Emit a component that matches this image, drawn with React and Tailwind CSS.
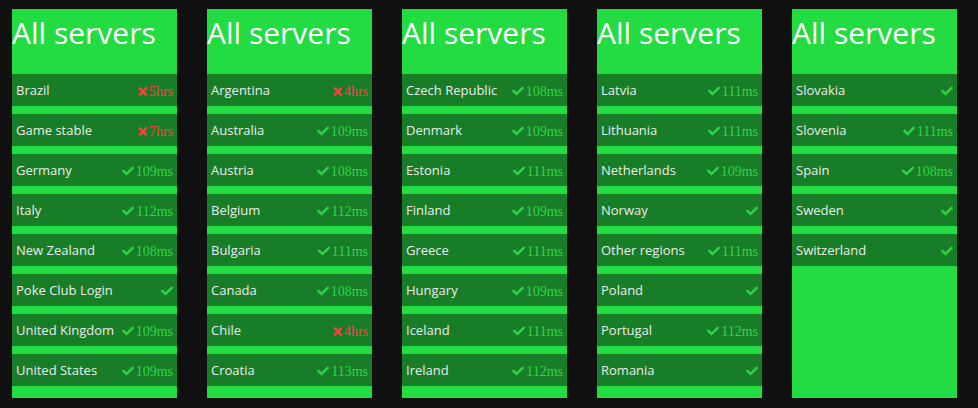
import React from "react";
import { FaCheck, FaTimes } from "react-icons/fa";

const columns = [
  [
    ["Brazil", "bad", "5hrs"],
    ["Game stable", "bad", "7hrs"],
    ["Germany", "ok", "109ms"],
    ["Italy", "ok", "112ms"],
    ["New Zealand", "ok", "108ms"],
    ["Poke Club Login", "ok", ""],
    ["United Kingdom", "ok", "109ms"],
    ["United States", "ok", "109ms"],
  ],
  [
    ["Argentina", "bad", "4hrs"],
    ["Australia", "ok", "109ms"],
    ["Austria", "ok", "108ms"],
    ["Belgium", "ok", "112ms"],
    ["Bulgaria", "ok", "111ms"],
    ["Canada", "ok", "108ms"],
    ["Chile", "bad", "4hrs"],
    ["Croatia", "ok", "113ms"],
  ],
  [
    ["Czech Republic", "ok", "108ms"],
    ["Denmark", "ok", "109ms"],
    ["Estonia", "ok", "111ms"],
    ["Finland", "ok", "109ms"],
    ["Greece", "ok", "111ms"],
    ["Hungary", "ok", "109ms"],
    ["Iceland", "ok", "111ms"],
    ["Ireland", "ok", "112ms"],
  ],
  [
    ["Latvia", "ok", "111ms"],
    ["Lithuania", "ok", "111ms"],
    ["Netherlands", "ok", "109ms"],
    ["Norway", "ok", ""],
    ["Other regions", "ok", "111ms"],
    ["Poland", "ok", ""],
    ["Portugal", "ok", "112ms"],
    ["Romania", "ok", ""],
  ],
  [
    ["Slovakia", "ok", ""],
    ["Slovenia", "ok", "111ms"],
    ["Spain", "ok", "108ms"],
    ["Sweden", "ok", ""],
    ["Switzerland", "ok", ""],
  ],
];

const ServerRow = ({ name, state, value }) => {
  const bad = state === "bad";
  return (
    <div className="flex items-center justify-between h-8 mb-2 bg-[#177d26] pl-1 pr-1 pt-[2px]">
      <span className="text-[13px] text-[#ececec] font-['Open_Sans',sans-serif]">{name}</span>
      <span
        className={
          bad
            ? "flex items-center gap-[1px] text-[#ff4040] text-[14px] font-['Liberation_Serif',serif]"
            : "flex items-center gap-[2px] text-[#2fd447] text-[14px] font-['Liberation_Serif',serif]"
        }
      >
        {bad ? <FaTimes className="w-[10px] h-[13px]" /> : <FaCheck className="w-[12px] h-[12px]" />}
        {value}
      </span>
    </div>
  );
};

export default function App() {
  return (
    <div className="w-[978px] h-[408px] bg-[#111111] flex gap-[30px] pl-[12px] pt-[9px] overflow-hidden">
      {columns.map((col, i) => (
        <div key={i} className="w-[165px] h-[389px] bg-[#22dc41] flex flex-col">
          <div className="h-[65px] shrink-0">
            <h1 className="text-[30px] leading-[48px] text-white font-['Open_Sans',sans-serif]">All servers</h1>
          </div>
          {col.map((row) => (
            <ServerRow key={row[0]} name={row[0]} state={row[1]} value={row[2]} />
          ))}
        </div>
      ))}
    </div>
  );
}
